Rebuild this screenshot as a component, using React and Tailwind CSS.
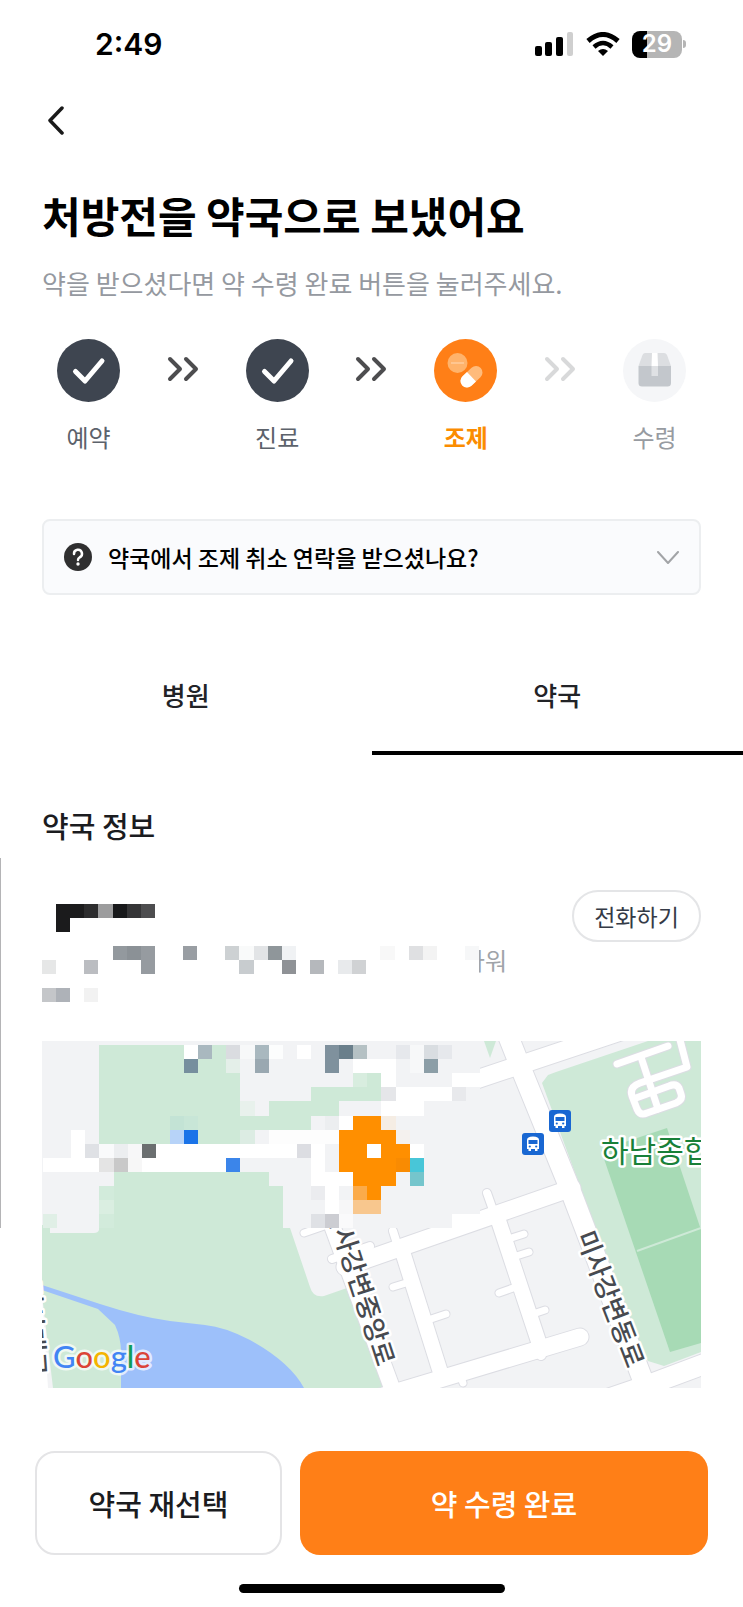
import React, { useState } from 'react';

const CELL = 14.1;

// [column, row, columns, rows, colour]
const nameCells = [
  [1, 0, 1, 2, '#1b1b1c'],
  [2, 0, 1, 1, '#1c1c1d'],
  [3, 0, 1, 1, '#2d2d2e'],
  [4, 0, 1, 1, '#9c9c9d'],
  [5, 0, 1, 1, '#18191b'],
  [6, 0, 1, 1, '#353537'],
  [7, 0, 1, 1, '#4d4d4f'],
];

const addressCells = [
  [5, 0, 1, 1, '#93999e'],
  [6, 0, 1, 1, '#8b9196'],
  [7, 0, 1, 2, '#969ba0'],
  [10, 0, 1, 1, '#999ea3'],
  [13, 0, 1, 1, '#cdd1d3'],
  [14, 0, 1, 1, '#f9fafa'],
  [15, 0, 1, 1, '#e2e4e6'],
  [16, 0, 1, 1, '#8f969a'],
  [17, 0, 1, 1, '#f0f2f4'],
  [24, 0, 1, 1, '#f8f8f8'],
  [26, 0, 1, 1, '#dfe0e2'],
  [27, 0, 1, 1, '#f3f3f3'],
  [30, 0, 1, 1, '#f6f7f8'],
  [0, 1, 1, 1, '#e6e7e7'],
  [3, 1, 1, 1, '#bbbdc1'],
  [14, 1, 1, 1, '#c8cccf'],
  [17, 1, 1, 1, '#8f9296'],
  [19, 1, 1, 1, '#b5b8bc'],
  [21, 1, 1, 1, '#e8eaec'],
  [22, 1, 1, 1, '#d0d2d4'],
  [0, 3, 1, 1, '#c4c6c9'],
  [1, 3, 1, 1, '#aeb2b8'],
  [3, 3, 1, 1, '#f2f2f2'],
];

const mapCells = [
  [0, 0, 31, 13, '#f2f3f5'],
  // park
  [4, 0, 10, 7, '#cee9d7'],
  [14, 5, 5, 1, '#cee9d7'],
  [16, 4, 5, 1, '#cee9d7'],
  [19, 3, 5, 1, '#cee9d7'],
  [22, 2, 1, 1, '#d8eddf'],
  [23, 2, 1, 1, '#cee9d7'],
  [5, 9, 11, 4, '#cee9d7'],
  [16, 10, 1, 3, '#cee9d7'],
  [4, 10, 1, 3, '#d2ebdb'],
  [4, 11, 1, 1, '#daeee1'],
  [0, 12, 1, 1, '#e0efe6'],
  [9, 5, 1, 1, '#c3e3d5'],
  [10, 5, 1, 1, '#c8e6d7'],
  [14, 4, 1, 1, '#e8f1ec'],
  [14, 6, 1, 1, '#dcece3'],
  // roads
  [2, 6, 1, 2, '#ffffff'],
  [4, 7, 15, 1, '#ffffff'],
  [0, 8, 14, 1, '#ffffff'],
  [16, 6, 5, 1, '#fdfdfd'],
  [19, 7, 1, 3, '#ffffff'],
  [20, 9, 1, 3, '#ffffff'],
  [21, 9, 1, 1, '#ffffff'],
  [22, 1, 3, 1, '#ffffff'],
  [24, 2, 1, 1, '#ffffff'],
  [29, 2, 2, 1, '#ffffff'],
  [25, 3, 4, 1, '#ffffff'],
  [24, 4, 3, 1, '#ffffff'],
  [21, 5, 1, 1, '#ffffff'],
  [26, 7, 1, 1, '#ffffff'],
  [29, 12, 2, 1, '#ffffff'],
  // top row of labels
  [10, 0, 1, 1, '#ffffff'],
  [11, 0, 1, 1, '#a9b8bf'],
  [13, 0, 1, 1, '#dadce0'],
  [14, 0, 1, 1, '#f7f8f9'],
  [15, 0, 1, 1, '#a9b8bf'],
  [16, 0, 1, 1, '#fcfdfd'],
  [18, 0, 1, 1, '#ffffff'],
  [20, 0, 1, 2, '#7f919d'],
  [21, 0, 1, 1, '#6a7f8b'],
  [22, 0, 1, 1, '#b5c1c4'],
  [25, 0, 1, 1, '#e6e8ec'],
  [26, 0, 1, 2, '#f7f8f9'],
  [27, 0, 1, 1, '#d9dde1'],
  [28, 0, 1, 1, '#e6e8ec'],
  [10, 1, 1, 1, '#768f9e'],
  [13, 1, 1, 1, '#e4efe9'],
  [15, 1, 1, 1, '#9aa8b1'],
  [27, 1, 1, 1, '#8c9ea7'],
  [24, 3, 1, 1, '#e5e6e9'],
  [29, 3, 1, 1, '#e8e9ec'],
  // small markers
  [9, 6, 1, 1, '#b7d3f8'],
  [10, 6, 1, 1, '#1a73e8'],
  [3, 7, 1, 1, '#dfe1e5'],
  [4, 7, 1, 1, '#f9fafb'],
  [5, 7, 1, 1, '#eceef0'],
  [6, 7, 1, 1, '#f7f7f8'],
  [7, 7, 1, 1, '#6b6f70'],
  [18, 7, 1, 1, '#dcdde2'],
  [4, 8, 1, 1, '#e4e4e4'],
  [5, 8, 1, 1, '#c9c9c9'],
  [6, 8, 1, 1, '#f7f7f7'],
  [13, 8, 1, 1, '#3b85ea'],
  [20, 5, 1, 1, '#eceef0'],
  [24, 5, 1, 1, '#f5ede4'],
  [25, 6, 1, 1, '#f4f1ee'],
  [19, 10, 1, 1, '#ebecef'],
  [19, 12, 1, 1, '#dfe1e5'],
  [20, 12, 1, 1, '#cccdd2'],
  [21, 12, 1, 1, '#fafafb'],
  [21, 11, 1, 1, '#f7f7f8'],
  // pharmacy pin
  [22, 5, 2, 1, '#ff8f00'],
  [21, 6, 4, 3, '#ff8f00'],
  [25, 7, 1, 1, '#ff8f00'],
  [25, 8, 1, 1, '#f98b02'],
  [22, 9, 3, 1, '#ff8f00'],
  [22, 10, 1, 1, '#fbab4a'],
  [23, 10, 1, 1, '#ff8f00'],
  [22, 11, 2, 1, '#f8c78e'],
  [23, 7, 1, 1, '#ffffff'],
  [26, 8, 1, 1, '#48c6d8'],
  [26, 9, 1, 1, '#75c5cc'],
];

const roads = [
  { d: 'M505 1028 L522 1071 L568 1184 L652 1404', width: 20 },
  { d: 'M460 1085 L640 1025', width: 18 },
  { d: 'M345 1267 L572 1188', width: 17 },
  { d: 'M330 1220 L392 1388 L396 1400', width: 16 },
  { d: 'M402 1250 L441 1374', width: 15 },
  { d: 'M497 1216 L540 1346', width: 15 },
  { d: 'M380 1397 L580 1337', width: 17 },
  { d: 'M590 1405 L640 1388 L715 1360', width: 20 },
  { d: 'M304 1233 L330 1224', width: 7 },
  { d: 'M332 1259 L370 1246', width: 8 },
  { d: 'M393 1231 L399 1250', width: 8 },
  { d: 'M487 1193 L493 1210', width: 8 },
  { d: 'M393 1287 L406 1283', width: 7 },
  { d: 'M446 1314 L428 1320', width: 7 },
  { d: 'M524 1234 L505 1240', width: 7 },
  { d: 'M529 1252 L510 1258', width: 7 },
  { d: 'M499 1293 L516 1287', width: 7 },
  { d: 'M545 1310 L530 1315', width: 7 },
  { d: 'M463 1383 L459 1372', width: 7 },
  { d: 'M541 1355 L538 1346', width: 10 },
  { d: 'M617 1064 L668 1046', width: 7 },
  { d: 'M641 1057 L658 1109', width: 7 },
  { d: 'M679 1036 L687 1067 L640 1083 Q629 1087 632 1096 L637 1109 Q640 1116 647 1113 L676 1103 Q683 1100 681 1094 L679 1088 Q676 1083 669 1086 L636 1098', width: 7 },
];

const Mosaic = ({ cells }) => (
  <g shapeRendering="crispEdges">
    {cells.map(([col, row, cols, rows, fill], i) => (
      <rect
        key={i}
        x={col * CELL}
        y={row * CELL}
        width={cols * CELL}
        height={rows * CELL}
        fill={fill}
      />
    ))}
  </g>
);

const BusStop = ({ x, y }) => (
  <g transform={`translate(${x} ${y})`}>
    <rect width="22" height="22" rx="3" fill="#1967d2" />
    <path d="M5 7 Q5 3.500 11 3.500 Q17 3.500 17 7 V16 H15.500 V18 H13 V16 H9 V18 H6.500 V16 H5 Z" fill="#fff" />
    <path d="M6.500 7 H15.500 V11 H6.500 Z" fill="#1967d2" />
    <circle cx="7.800" cy="13.500" r="1.100" fill="#1967d2" />
    <circle cx="14.200" cy="13.500" r="1.100" fill="#1967d2" />
  </g>
);

const PharmacyMap = () => (
  <svg
    viewBox="42 1041 659 347"
    className="block h-auto w-full font-['Noto_Sans_CJK_KR',sans-serif]"
    role="img"
    aria-label="약국 지도"
  >
    <rect x="42" y="1041" width="659" height="347" fill="#f2f3f5" />

    {/* parks and water */}
    <path d="M42 1225 H289 L310 1287 Q313 1298 324 1296 L347 1288 L387 1388 H42 Z" fill="#cee9d7" />
    <path d="M50 1225 H99 V1230 Q98 1233 94 1233 H50 Z" fill="#f2f3f5" />
    <path d="M484 1041 H496 L490 1058 Z" fill="#cee9d7" />
    <path d="M542 1083 L548 1075 L556 1072 L648 1041 H701 V1352 L664 1366 L648 1361 L640 1350 Z" fill="#cee9d7" />
    <path d="M601 1150 L667 1128 L701 1230 V1343 L670 1352 Z" fill="#a7dab5" />
    <path d="M637 1251 L701 1228" stroke="#cee9d7" strokeWidth="2" />
    <path
      d="M42 1285 L100 1304 Q140 1317 170 1321 L205 1325 Q225 1327 250 1340 Q290 1362 304 1388 H121 V1352 Q121 1338 115 1325 L98 1309 L42 1290 Z"
      fill="#9dc0fa"
    />
    <path d="M38 1290 L42 1295 L53 1388 H38 Z" fill="#f2f3f5" />
    <path d="M38 1290 L42 1295 L48 1388 H38 Z" fill="#fff" />

    <g fill="none" stroke="#dcdde3" strokeLinecap="round" strokeLinejoin="round">
      {roads.map(({ d, width }) => (
        <path key={d} d={d} strokeWidth={width + 2} />
      ))}
    </g>
    <g fill="none" stroke="#fff" strokeLinecap="round" strokeLinejoin="round">
      {roads.map(({ d, width }) => (
        <path key={d} d={d} strokeWidth={width} />
      ))}
    </g>

    <BusStop x={549} y={1110} />
    <BusStop x={522} y={1133} />

    <g stroke="#fff" strokeWidth="5" strokeLinejoin="round" paintOrder="stroke">
      <text x="601" y="1162" fontSize="30" fill="#188038">하남종합</text>
      <g fill="#474a50" fontSize="26" fontWeight="500" textAnchor="middle">
        <text transform="translate(610 1299) rotate(69)" y="9">미사강변동로</text>
        <text transform="translate(360 1285) rotate(72)" y="9">미사강변중앙로</text>
        <text transform="translate(33 1328) rotate(86)" y="9">미사대로</text>
      </g>
    </g>

    <g transform="translate(43 1045)">
      <Mosaic cells={mapCells} />
    </g>

    <text
      x="53"
      y="1368"
      className="font-['Lato',sans-serif]"
      fontSize="31"
      fontWeight="500"
      stroke="#ffffffb0"
      strokeWidth="5"
      strokeLinejoin="round"
      paintOrder="stroke"
    >
      <tspan fill="#4285f4">G</tspan>
      <tspan fill="#db4437">o</tspan>
      <tspan fill="#f4b400">o</tspan>
      <tspan fill="#4285f4">g</tspan>
      <tspan fill="#0f9d58">l</tspan>
      <tspan fill="#db4437">e</tspan>
    </text>
  </svg>
);

const StatusBar = () => (
  <div className="flex h-[88px] items-center justify-between pr-[57px] pl-[95px]">
    <span className="font-['Inter',sans-serif] text-[30px] leading-9 font-semibold">2:49</span>
    <div className="flex items-center gap-3">
      <svg width="39" height="24" viewBox="0 0 39 24">
        <rect x="0" y="14" width="7" height="10" rx="2" />
        <rect x="10" y="10" width="7" height="14" rx="2" />
        <rect x="21" y="5" width="7" height="19" rx="2" />
        <rect x="32" y="0" width="6" height="24" rx="2" fill="#cfcfcf" />
      </svg>
      <svg width="34" height="24" viewBox="0 0 34 24" fill="none" stroke="#000" strokeWidth="5">
        <path d="M2 9 Q17 -4 32 9" />
        <path d="M8 15 Q17 7 26 15" strokeWidth="4.500" />
        <path d="M17 24 L12 19 Q17 15 22 19 Z" fill="#000" stroke="none" />
      </svg>
      <div className="flex items-center gap-px">
        <div className="flex h-[27px] w-[50px] items-center justify-center rounded-lg bg-linear-to-r from-black from-30% to-[#b5b5b5] to-30% font-['Inter',sans-serif] text-[24px] leading-none font-semibold text-white">
          29
        </div>
        <div className="h-2 w-[3px] rounded-r-full bg-[#b5b5b5]" />
      </div>
    </div>
  </div>
);

const CheckIcon = () => (
  <svg viewBox="0 0 63 63" className="size-[63px]">
    <circle cx="31.500" cy="31.500" r="31.500" fill="#3e4550" />
    <path d="M18.500 32.500 L28 42 L45 22" fill="none" stroke="#fff" strokeWidth="5" strokeLinecap="round" strokeLinejoin="round" />
  </svg>
);

const PillIcon = () => (
  <svg viewBox="0 0 63 63" className="size-[63px]">
    <circle cx="31.500" cy="31.500" r="31.500" fill="#ff7f17" />
    <circle cx="23.500" cy="24" r="10" fill="#ffb36b" />
    <path d="M17 24 H30" stroke="#ffc690" strokeWidth="2" />
    <path d="M33 42 L42 33.500" stroke="#ffbb7b" strokeWidth="13" strokeLinecap="round" />
    <path d="M33 33 L42 42.500 L37.500 46.800 A6.500 6.500 0 0 1 28.500 37.300 Z" fill="#fff" />
  </svg>
);

const BoxIcon = () => (
  <svg viewBox="0 0 63 63" className="size-[63px]">
    <circle cx="31.500" cy="31.500" r="31.500" fill="#f5f6f8" />
    <path d="M22 14 H41 Q43 14 44 16 L48 27 H15.500 L19.500 16 Q20.500 14 22 14 Z" fill="#dcdee1" />
    <path d="M15.500 27 H48 V44 Q48 47.500 44.500 47.500 H19 Q15.500 47.500 15.500 44 Z" fill="#c3c7cc" />
    <path d="M29 14 H34.500 L35 27 H28.500 Z" fill="#fff" />
    <path d="M28.500 27 H35 V37 H28.500 Z" fill="#dfe1e4" />
  </svg>
);

const steps = [
  { label: '예약', Icon: CheckIcon, text: 'text-[#5c626b]', arrow: 'text-[#4d4d4f]' },
  { label: '진료', Icon: CheckIcon, text: 'text-[#5c626b]', arrow: 'text-[#4d4d4f]' },
  { label: '조제', Icon: PillIcon, text: 'font-bold text-[#fb8c00]', arrow: 'text-[#d8d9da]' },
  { label: '수령', Icon: BoxIcon, text: 'text-[#979ba1]' },
];

const Steps = () => (
  <ol className="mx-[57px] mt-10 flex justify-between">
    {steps.map(({ label, Icon, text, arrow }) => (
      <React.Fragment key={label}>
        <li className="flex w-[63px] flex-col items-center gap-[19px]">
          <Icon />
          <span className={`text-[24px] leading-8 ${text}`}>{label}</span>
        </li>
        {arrow && (
          <li aria-hidden="true" className={`flex h-[60px] items-center ${arrow}`}>
            <svg width="32" height="26" viewBox="0 0 32 26" fill="none" stroke="currentColor" strokeWidth="4" strokeLinecap="round" strokeLinejoin="round">
              <path d="M3 3 L13 13 L3 23 M19 3 L29 13 L19 23" />
            </svg>
          </li>
        )}
      </React.Fragment>
    ))}
  </ol>
);

const tabs = ['병원', '약국'];

const App = () => {
  const [tab, setTab] = useState('약국');

  return (
    <div className="relative bg-white font-['Noto_Sans_CJK_KR',sans-serif] text-black">
      <StatusBar />

      <div className="flex h-16 items-center px-10">
        <button type="button" aria-label="뒤로" className="p-2">
          <svg width="17" height="29" viewBox="0 0 17 29" fill="none" stroke="#1a1a1a" strokeWidth="3.500" strokeLinecap="round" strokeLinejoin="round">
            <path d="M14 2 L2 14.500 L14 27" />
          </svg>
        </button>
      </div>

      <main>
        <h1 className="mt-[38px] px-[42px] text-[42px] leading-[50px] font-bold">처방전을 약국으로 보냈어요</h1>
        <p className="mt-[27px] px-[42px] text-[26px] leading-8 text-[#9599a0]">
          약을 받으셨다면 약 수령 완료 버튼을 눌러주세요.
        </p>

        <Steps />

        <div className="mt-[66px] px-[42px]">
          <button
            type="button"
            aria-expanded="false"
            className="flex h-[76px] w-full items-center rounded-lg border-2 border-[#eceef0] bg-[#fafbfd] px-5 text-left"
          >
            <svg width="28" height="28" viewBox="0 0 28 28" fill="none">
              <circle cx="14" cy="14" r="14" fill="#2f2f30" />
              <path d="M10 11 A4 4 0 1 1 15.500 14.500 Q14 15.300 14 17" stroke="#fff" strokeWidth="2.500" strokeLinecap="round" />
              <circle cx="14" cy="21" r="1.700" fill="#fff" />
            </svg>
            <span className="ml-4 grow text-[23px] leading-8 font-medium">약국에서 조제 취소 연락을 받으셨나요?</span>
            <svg width="22" height="13" viewBox="0 0 22 13" fill="none" stroke="#a2a4a7" strokeWidth="2" strokeLinecap="round" strokeLinejoin="round">
              <path d="M1 1 L11 12 L21 1" />
            </svg>
          </button>
        </div>

        <div role="tablist" className="mt-[45px] grid grid-cols-2">
          {tabs.map((name) => (
            <button
              key={name}
              type="button"
              role="tab"
              aria-selected={tab === name}
              onClick={() => setTab(name)}
              className={`h-[115px] border-b-4 pb-0.5 text-[26px] leading-8 font-medium text-[#222327] ${
                tab === name ? 'border-b-black' : 'border-b-transparent'
              }`}
            >
              {name}
            </button>
          ))}
        </div>

        <section className="px-[42px]">
          <h2 className="mt-[52px] text-[29px] leading-9 font-medium text-[#1b1c1f]">약국 정보</h2>

          <div className="mt-[47px] flex items-start justify-between">
            <div className="pt-3.5">
              <svg width="437" height="28" aria-label="약국 이름">
                <Mosaic cells={nameCells} />
              </svg>
              <div className="mt-3.5 flex items-start">
                <svg width="437" height="57" aria-label="약국 주소">
                  <Mosaic cells={addressCells} />
                </svg>
                <span className="flex w-[28px] justify-end overflow-hidden text-[24px] leading-7 whitespace-nowrap text-[#a0a4a9]">
                  타워
                </span>
              </div>
            </div>
            <button
              type="button"
              className="h-[52px] w-[129px] rounded-full border-2 border-[#e4e5e7] text-[23px] leading-8 whitespace-nowrap text-[#343a46]"
            >
              전화하기
            </button>
          </div>

          <div className="mt-[38px]">
            <PharmacyMap />
          </div>
        </section>
      </main>

      <footer className="mt-[63px] pb-3.5">
        <div className="grid grid-cols-[247fr_408fr] gap-[18px] px-[35px]">
          <button type="button" className="h-[104px] rounded-[20px] border-2 border-[#e4e4e6] text-[29px] leading-9 font-medium text-[#1b1c1f]">
            약국 재선택
          </button>
          <button type="button" className="h-[104px] rounded-[20px] bg-[#ff7f17] text-[29px] leading-9 font-medium text-white">
            약 수령 완료
          </button>
        </div>
        <div className="mx-auto mt-[29px] h-[9px] w-[266px] rounded-full bg-black" />
      </footer>

      {/* edge handle of the side panel */}
      <div className="absolute top-[858px] left-0 h-[370px] w-px bg-[#b4b4b6]" />
    </div>
  );
};

export default App;
